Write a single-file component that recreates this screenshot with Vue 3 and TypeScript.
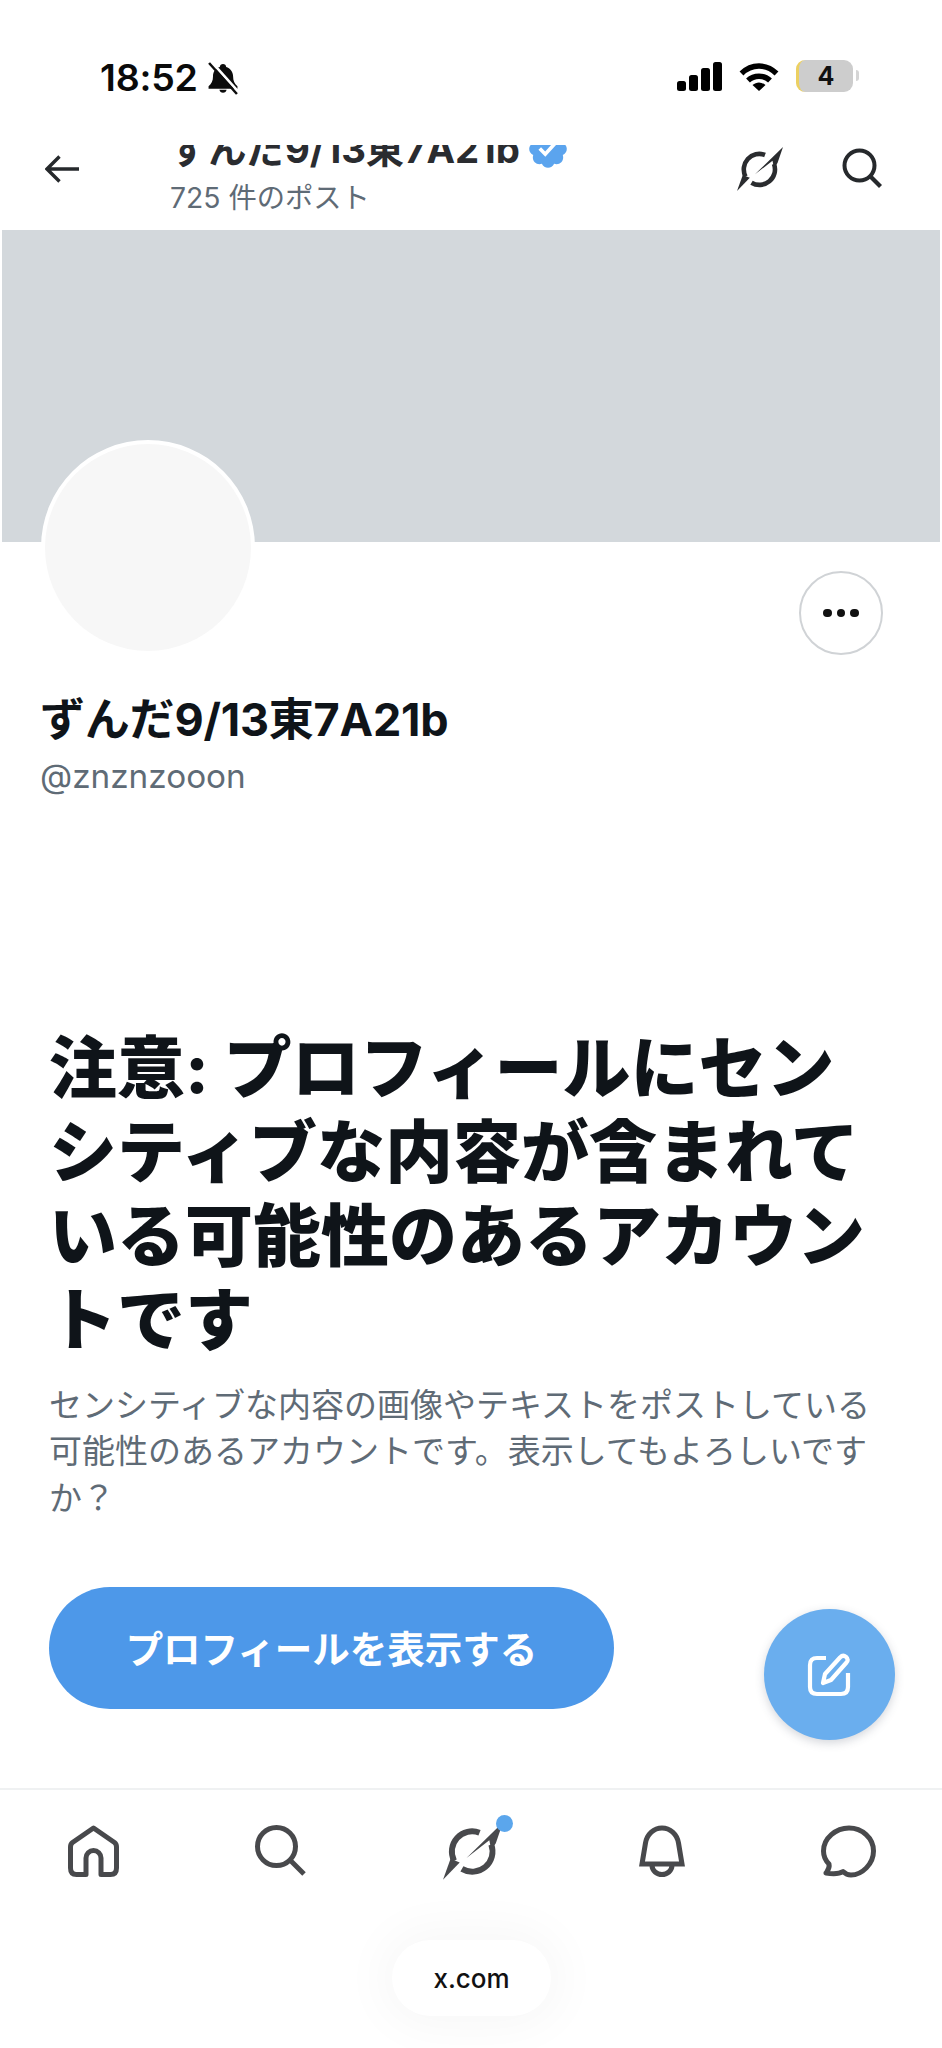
<script setup lang="ts">
const navIcons: string[] = ['home', 'search', 'grok', 'bell', 'chat']
const grokPaths = {
  arcA: 'M28 8A15.500 15.500 0 0 0 8.500 29.500',
  arcB: 'M14.500 35.700A15.500 15.500 0 0 0 37 17',
  tipA: 'M5.800 28 0 44 12.800 30.800Z',
  tipB: 'M46 0 18 27.300 35.500 13.800 37 21 40.500 16Z',
}
</script>

<template>
  <div class="page">
    <div class="status">
      <div class="status-left">
        <span class="time">18:52</span>
        <svg class="bell-off" viewBox="0 0 31 32" width="32" height="33">
          <path d="M15.500 2c-1.700 0-3 1.200-3.100 2.800C8 6 5.800 9.500 5.800 14c0 4.200-1.400 7-4.300 9.500V26h28v-2.500c-2.900-2.500-4.200-5.300-4.200-9.500 0-4.500-2.900-8-6.700-9.200C18.500 3.200 17.200 2 15.500 2Z" fill="#0c0c0c" />
          <path d="M12 27h7a3.600 3.600 0 0 1-7 0Z" fill="#0c0c0c" />
          <path d="M4.500 0 30.500 29" stroke="#fff" stroke-width="2.600" />
          <path d="M2 1 29 31" stroke="#0c0c0c" stroke-width="2.400" />
        </svg>
      </div>
      <div class="status-right">
        <div class="signal"><i class="b1"></i><i class="b2"></i><i class="b3"></i><i class="b4"></i></div>
        <svg viewBox="0 0 40 29" width="40" height="29">
          <path d="M2.500 11.500C12.500 1.500 27.500 1.500 37.500 11.500" fill="none" stroke="#000" stroke-width="5.500" />
          <path d="M9 18.500C15 12.800 25 12.800 31 18.500" fill="none" stroke="#000" stroke-width="5.500" />
          <path d="M13.500 23 20 29 26.500 23C22.500 19.500 17.500 19.500 13.500 23Z" fill="#000" />
        </svg>
        <div class="battery"><span>4</span></div>
        <i class="nub"></i>
      </div>
    </div>

    <header class="topbar">
      <svg class="back" viewBox="0 0 34 28" width="34" height="28">
        <path d="M14.500 1.500 2 14 14.500 26.500M2.500 14H34" fill="none" stroke="#26292c" stroke-width="3.400" />
      </svg>
      <div class="titles">
        <div class="title-clip">
          <div class="title">
            <span>ずんだ9/13東7A21b</span>
            <svg viewBox="0 0 24 24" width="44" height="44"><path fill="#5ba4ee" d="M22.250 12c0-1.430-.88-2.670-2.190-3.340.46-1.390.2-2.900-.81-3.910s-2.520-1.270-3.910-.81c-.66-1.310-1.910-2.190-3.340-2.190s-2.670.88-3.330 2.190c-1.400-.46-2.910-.2-3.920.81s-1.260 2.520-.8 3.910c-1.310.67-2.200 1.910-2.200 3.340s.89 2.670 2.200 3.340c-.46 1.390-.21 2.900.8 3.910s2.520 1.260 3.910.81c.67 1.310 1.910 2.190 3.340 2.190s2.680-.88 3.340-2.190c1.390.45 2.900.2 3.910-.81s1.270-2.520.81-3.910c1.310-.67 2.190-1.910 2.190-3.340zm-11.710 4.200L6.800 12.460l1.410-1.420 2.260 2.260 4.800-5.230 1.470 1.360-6.200 6.770z"/></svg>
          </div>
        </div>
        <div class="count">725 件のポスト</div>
      </div>
      <svg class="top-grok" viewBox="0 0 46 44" width="46" height="44">
        <g fill="none" stroke="#2a2c2f" stroke-width="4.600">
          <path :d="grokPaths.arcA" /><path :d="grokPaths.arcB" />
        </g>
        <g fill="#2a2c2f"><path :d="grokPaths.tipA" /><path :d="grokPaths.tipB" /></g>
      </svg>
      <svg class="top-search" viewBox="0 0 40 40" width="40" height="40">
        <circle cx="17.500" cy="17.500" r="15" fill="none" stroke="#26292c" stroke-width="4" />
        <path d="M28 28 38.500 38.500" stroke="#26292c" stroke-width="4.200" />
      </svg>
    </header>

    <div class="banner"></div>

    <main class="content">
      <section class="profile">
        <div class="avatar"></div>
        <div class="actions">
          <div class="more"><i></i><i></i><i></i></div>
        </div>
        <h2 class="name">ずんだ9/13東7A21b</h2>
        <div class="handle">@znznzooon</div>
      </section>

      <section class="warning">
        <h1>注意: プロフィールにセンシティブな内容が含まれている可能性のあるアカウントです</h1>
        <p>センシティブな内容の画像やテキストをポストしている可能性のあるアカウントです。表示してもよろしいですか？</p>
        <button class="show" type="button">プロフィールを表示する</button>
      </section>

      <button class="fab" type="button" aria-label="ポストする">
        <svg viewBox="0 0 45 44" width="45" height="44" fill="none" stroke="#fff" stroke-width="4.200" stroke-linejoin="round">
          <path d="M19 5H10Q3 5 3 12V34Q3 41 10 41H34Q41 41 41 34V20" />
          <path d="M16 30 18 21 33 4.500Q36 1.500 39 3.800 42 6.500 39.500 9.500L24 27Z" />
        </svg>
      </button>
    </main>

    <nav class="nav">
      <div v-for="icon in navIcons" :key="icon" class="nav-cell">
        <svg v-if="icon === 'home'" viewBox="0 0 51 52" width="51" height="52" fill="none" stroke="#48494c" stroke-width="5" stroke-linejoin="round">
          <path d="M25.500 3 46.500 17.500Q48.500 19 48.500 22V43Q48.500 49.500 42.500 49.500H33V33A7.500 7.500 0 0 0 18 33V49.500H8.500Q2.500 49.500 2.500 43V22Q2.500 19 4.500 17.500Z" />
        </svg>
        <svg v-else-if="icon === 'search'" viewBox="0 0 51 51" width="51" height="51" fill="none" stroke="#48494c" stroke-width="5">
          <circle cx="21.500" cy="21.500" r="19" />
          <path d="M35 35 49 49" />
        </svg>
        <div v-else-if="icon === 'grok'" class="grok-wrap">
          <svg viewBox="0 0 46 44" width="60" height="58">
            <g fill="none" stroke="#48494c" stroke-width="4.500">
              <path :d="grokPaths.arcA" /><path :d="grokPaths.arcB" />
            </g>
            <g fill="#48494c"><path :d="grokPaths.tipA" /><path :d="grokPaths.tipB" /></g>
          </svg>
          <i class="dot"></i>
        </div>
        <svg v-else-if="icon === 'bell'" viewBox="0 0 46 52" width="46" height="52" fill="none" stroke="#48494c" stroke-width="5">
          <path d="M3 39 6.500 18C8 9 15 3 23 3S38 9 39.500 18L43 39Z" />
          <path d="M13 40C13 46 18 49.500 23 49.500S33 46 33 40" />
        </svg>
        <svg v-else viewBox="0 0 55 53" width="55" height="53" fill="none" stroke="#48494c" stroke-width="5" stroke-linejoin="round">
          <path d="M28 3C41 3 52.500 13 52.500 26S41 50 30 50C26 50 24 48.500 22 46.500 19 48.500 14 49.500 5 48 7 45 9 43 8 39 4 35 2.500 31 2.500 26 2.500 13 15 3 28 3Z" />
        </svg>
      </div>
    </nav>

    <div class="url">x.com</div>
  </div>
</template>

<style>
html, body { margin: 0; background: #fff; }
</style>

<style scoped>
.page {
  position: relative;
  width: 942px;
  height: 2048px;
  overflow: hidden;
  display: flex;
  flex-direction: column;
  background: #fff;
  font-family: Inter, "Noto Sans CJK JP", sans-serif;
  color: #0f1419;
}
.status {
  height: 145px;
  flex: none;
  box-sizing: border-box;
  padding: 60px 89px 0 100px;
  display: flex;
  justify-content: space-between;
  align-items: flex-start;
}
.status-left { display: flex; align-items: center; gap: 9px; }
.time { font-size: 37.500px; font-weight: 600; line-height: 36px; color: #0a0a0a; letter-spacing: -0.2px; }
.status-right { display: flex; align-items: flex-start; gap: 17px; position: relative; padding-top: 2px; }
.signal { display: flex; align-items: flex-end; gap: 3px; height: 29px; }
.signal i { display: block; width: 9px; background: #000; border-radius: 2.500px; }
.b1 { height: 10px; }
.b2 { height: 16px; }
.b3 { height: 23px; }
.b4 { height: 29px; }
.battery {
  width: 57px;
  height: 32px;
  margin-top: -2px;
  box-sizing: border-box;
  background: #cdcdcd;
  border-left: 3px solid #ecd061;
  border-radius: 9px;
  display: flex;
  align-items: center;
  justify-content: center;
  font-size: 25px;
  font-weight: 700;
  color: #111;
}
.nub {
  position: absolute;
  right: -6px;
  top: 10px;
  width: 3px;
  height: 11px;
  background: #d5d5d5;
  border-radius: 0 3px 3px 0;
}
.topbar {
  height: 85px;
  flex: none;
  box-sizing: border-box;
  padding-left: 45px;
  display: flex;
  align-items: flex-start;
}
.back { margin-top: 10px; flex: none; }
.titles { width: 565px; margin-left: 91px; flex: none; }
.title-clip { height: 24px; overflow: hidden; }
.title {
  display: flex;
  align-items: center;
  gap: 6px;
  margin-top: -19px;
  height: 46px;
  font-size: 38.300px;
  font-weight: 700;
  line-height: 46px;
  color: #2a2c30;
  white-space: nowrap;
}
.count { margin-top: 11.500px; font-size: 28.300px; line-height: 34px; color: #5f6b76; }
.top-grok { margin-top: 2px; margin-left: 2px; flex: none; }
.top-search { margin-top: 3px; margin-left: 59px; flex: none; }
.banner { height: 312px; margin: 0 2px; flex: none; background: #d3d8dc; }
.content { position: relative; flex: 1; min-height: 0; }
.profile { position: relative; padding: 0 59px 0 40px; }
.avatar {
  position: absolute;
  left: 41px;
  top: -102px;
  width: 214px;
  height: 215px;
  box-sizing: border-box;
  border: 4px solid #fff;
  border-radius: 50%;
  background: #f7f7f7;
}
.actions { display: flex; justify-content: flex-end; padding-top: 29px; }
.more {
  width: 84px;
  height: 84px;
  box-sizing: border-box;
  border: 2px solid #d0d3d6;
  border-radius: 50%;
  display: flex;
  align-items: center;
  justify-content: center;
  gap: 5px;
}
.more i { width: 8.500px; height: 8.500px; border-radius: 50%; background: #111; }
.name { margin: 35px 0 0; font-size: 45px; line-height: 60px; font-weight: 700; letter-spacing: -0.2px; color: #0f1419; }
.handle { margin-top: 3.500px; font-size: 33.300px; line-height: 44px; color: #5f6b76; }
.warning { padding: 228.500px 0 0 49px; }
.warning h1 {
  width: 840px;
  margin: 0;
  font-size: 68px;
  line-height: 84px;
  font-weight: 800;
  color: #0f1419;
}
.warning p {
  width: 840px;
  margin: 19.500px 0 0;
  font-size: 33px;
  line-height: 46.500px;
  color: #5f6b76;
}
.show {
  display: block;
  width: 565px;
  height: 122px;
  margin-top: 66px;
  padding: 0 0 4px;
  border: 0;
  border-radius: 61px;
  background: #4d98e9;
  color: #fff;
  font-family: inherit;
  font-size: 37.500px;
  font-weight: 600;
}
.fab {
  position: absolute;
  left: 764px;
  top: 1067px;
  width: 131px;
  height: 131px;
  padding: 0;
  border: 0;
  border-radius: 50%;
  background: #6aaeee;
  box-shadow: 0 3px 10px rgba(60, 70, 90, 0.22);
  display: flex;
  align-items: center;
  justify-content: center;
}
.nav {
  height: 260px;
  flex: none;
  box-sizing: border-box;
  border-top: 2px solid #eff1f2;
  padding: 35px 66px 0 68px;
  display: flex;
  justify-content: space-between;
  align-items: flex-start;
}
.nav-cell { display: flex; justify-content: center; }
.grok-wrap { position: relative; height: 58px; margin-top: -3px; }
.dot {
  position: absolute;
  right: -10px;
  top: -7.500px;
  width: 17px;
  height: 17px;
  border-radius: 50%;
  background: #5ba6ec;
}
.url {
  position: absolute;
  left: 392px;
  top: 1940px;
  width: 159px;
  height: 76px;
  border-radius: 38px;
  background: #fff;
  box-shadow: 0 0 50px 10px rgba(0, 0, 0, 0.035);
  display: flex;
  align-items: center;
  justify-content: center;
  font-size: 26px;
  font-weight: 500;
  color: #111;
}
</style>
